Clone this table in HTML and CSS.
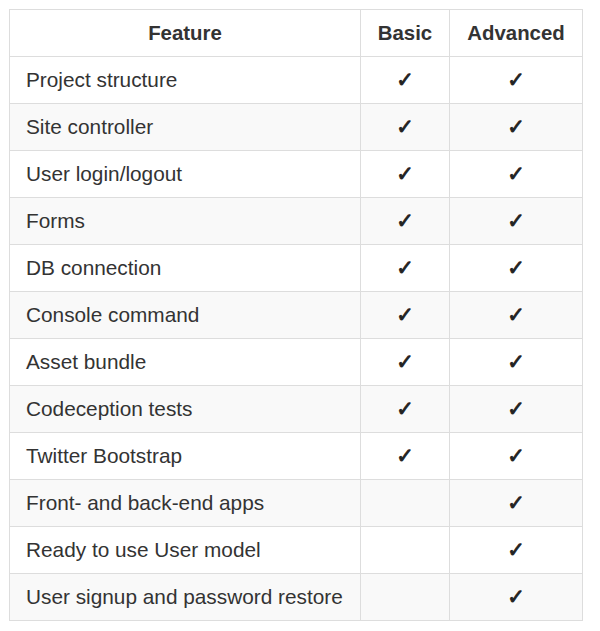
FILE: index.html
```html
<!DOCTYPE html>
<html>
<head>
<meta charset="utf-8">
<link rel="stylesheet" href="styles.css">
</head>
<body>
<table class="features">
  <colgroup>
    <col class="c-feature">
    <col class="c-basic">
    <col class="c-adv">
  </colgroup>
  <thead>
    <tr><th>Feature</th><th>Basic</th><th>Advanced</th></tr>
  </thead>
  <tbody>
    <tr><td>Project structure</td><td class="chk">✓</td><td class="chk">✓</td></tr>
    <tr><td>Site controller</td><td class="chk">✓</td><td class="chk">✓</td></tr>
    <tr><td>User login/logout</td><td class="chk">✓</td><td class="chk">✓</td></tr>
    <tr><td>Forms</td><td class="chk">✓</td><td class="chk">✓</td></tr>
    <tr><td>DB connection</td><td class="chk">✓</td><td class="chk">✓</td></tr>
    <tr><td>Console command</td><td class="chk">✓</td><td class="chk">✓</td></tr>
    <tr><td>Asset bundle</td><td class="chk">✓</td><td class="chk">✓</td></tr>
    <tr><td>Codeception tests</td><td class="chk">✓</td><td class="chk">✓</td></tr>
    <tr><td>Twitter Bootstrap</td><td class="chk">✓</td><td class="chk">✓</td></tr>
    <tr><td>Front- and back-end apps</td><td class="chk"></td><td class="chk">✓</td></tr>
    <tr><td>Ready to use User model</td><td class="chk"></td><td class="chk">✓</td></tr>
    <tr><td>User signup and password restore</td><td class="chk"></td><td class="chk">✓</td></tr>
  </tbody>
</table>
</body>
</html>
```

FILE: styles.css
```css
html, body {
  margin: 0;
  padding: 0;
  background: #fff;
}
body {
  padding: 9px 0 0 9px;
  font-family: "Liberation Sans", Arial, sans-serif;
  color: #333;
}
.features {
  border-collapse: collapse;
  width: 573px;
  table-layout: fixed;
  border: 1px solid #ddd;
  font-size: 20.8px;
}
.c-feature { width: 351px; }
.c-basic { width: 89px; }
.c-adv { width: 133px; }
.features th,
.features td {
  border: 1px solid #ddd;
  height: 47px;
  padding: 0 16px;
  box-sizing: border-box;
  vertical-align: middle;
  line-height: 24px;
}
.features th {
  font-weight: bold;
  font-size: 20.4px;
  text-align: center;
  color: #333;
  padding: 0 4px;
}
.features td {
  text-align: left;
  white-space: nowrap;
}
.features td.chk {
  text-align: center;
  font-family: "DejaVu Sans", sans-serif;
  font-size: 21px;
  color: #222;
  -webkit-text-stroke: 0.9px #222;
  padding: 0;
}
.features tbody tr:nth-child(even) td {
  background: #f9f9f9;
}
```
